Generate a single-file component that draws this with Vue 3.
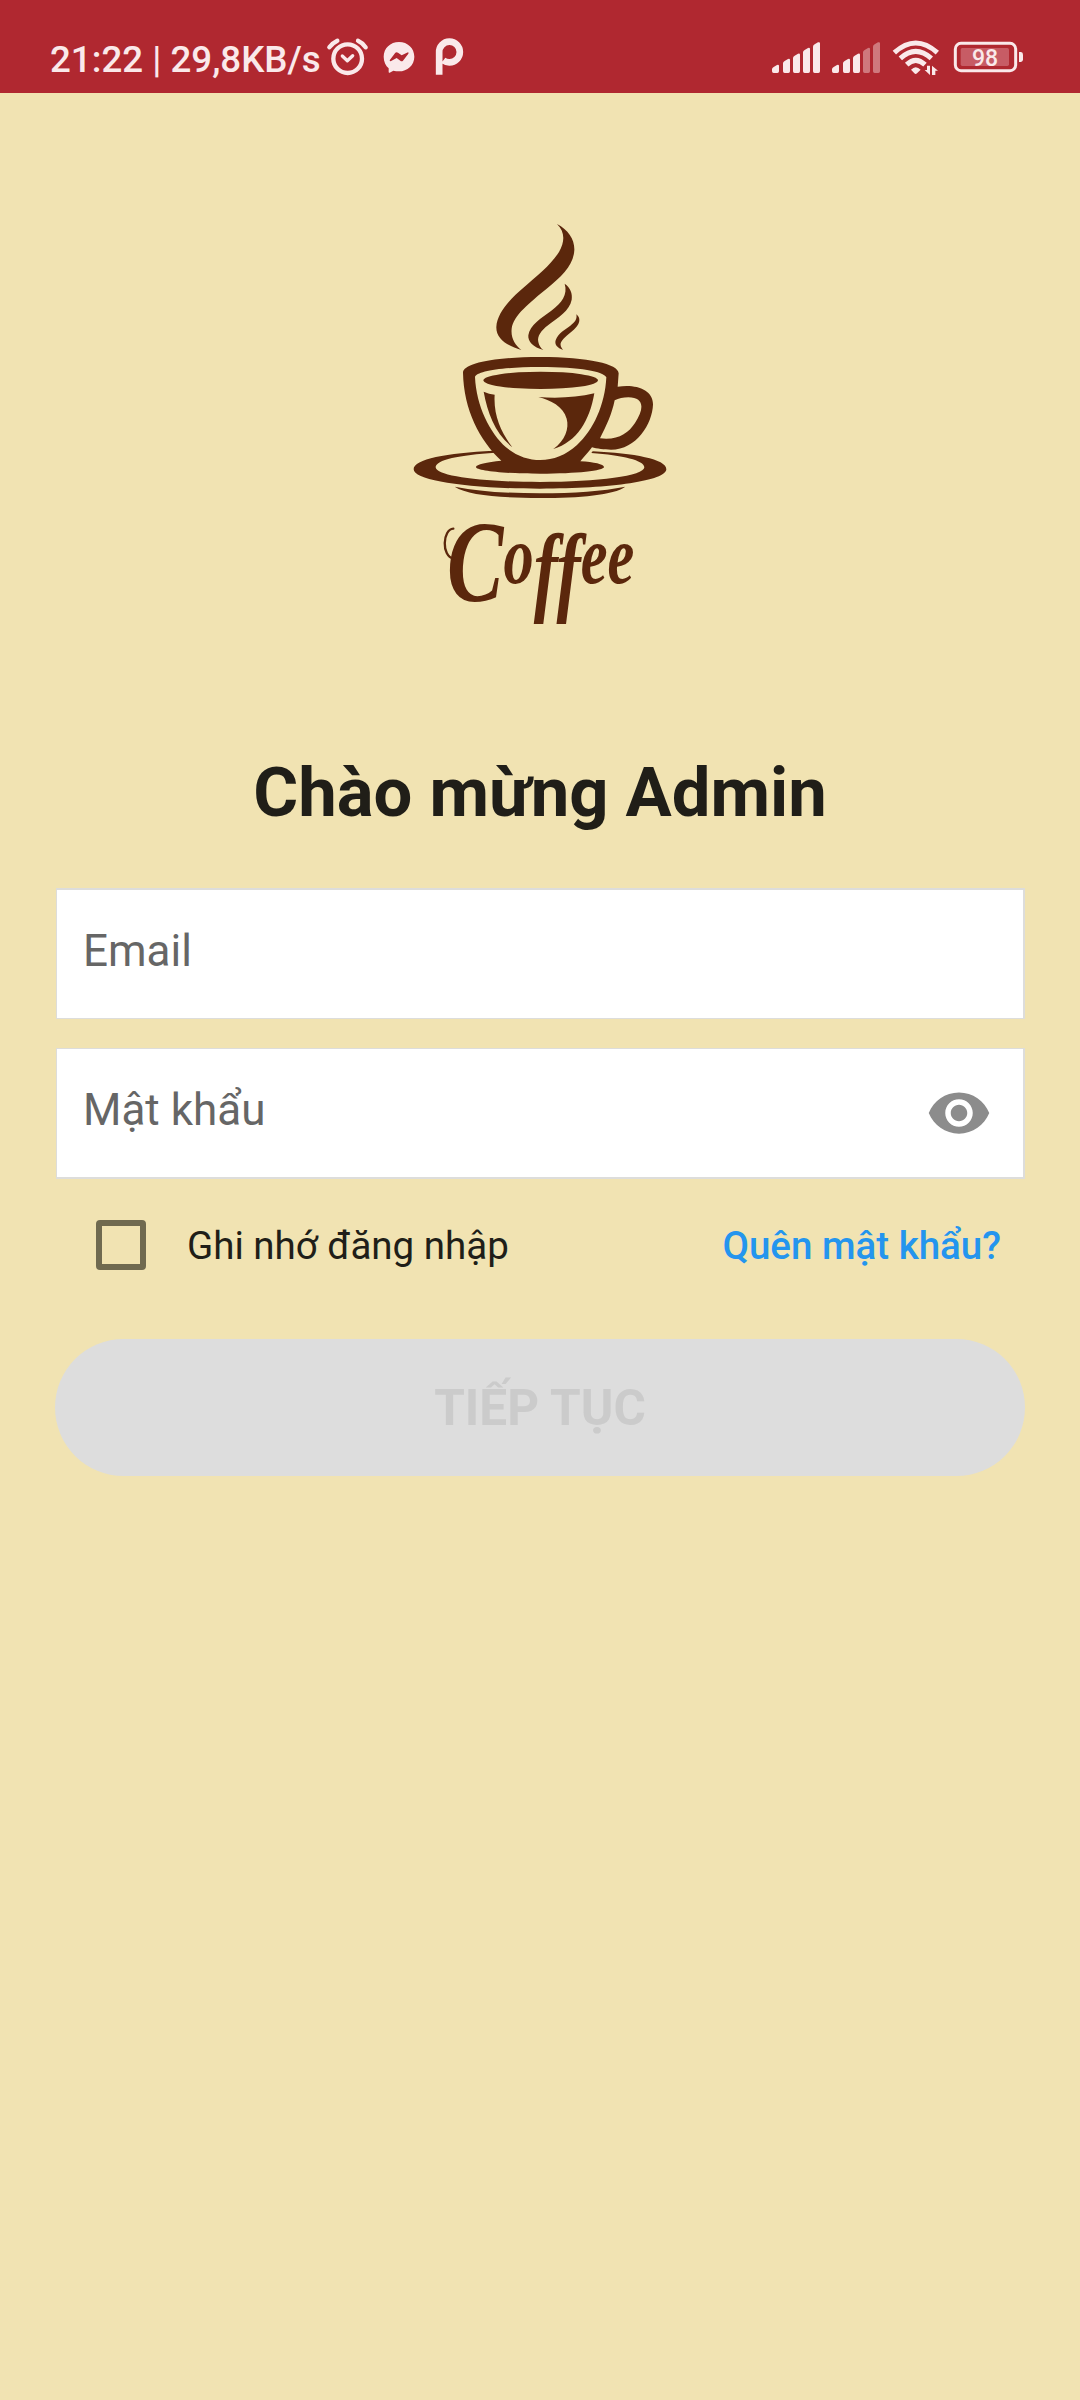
<script setup>
import { ref } from 'vue'

const email = ref('')
const password = ref('')
const remember = ref(false)

// x offset and top edge of each signal bar
const bars = [
  { x: 0, top: 134 },
  { x: 33, top: 116 },
  { x: 63, top: 100 },
  { x: 93, top: 83 },
  { x: 123, top: 66 },
]
const signals = [
  { id: 'sim1', lit: 5 },
  { id: 'sim2', lit: 3 },
]
const barPath = (b) =>
  `M${b.x} 154V${b.top + 14}Q${b.x} ${b.top + 9} ${b.x + 5} ${b.top + 7}L${b.x + 15} ${b.top + 1}Q${b.x + 21} ${b.top - 1} ${b.x + 21} ${b.top + 4}V154Q${b.x + 21} 159 ${b.x + 16} 159H${b.x + 5}Q${b.x} 159 ${b.x} 154Z`
</script>

<template>
  <div class="screen">
    <header class="status">
      <span class="clock">21:22 | 29,8KB/s</span>
      <svg class="alarm" viewBox="888 15 129 204" width="43" height="68">
        <g fill="none" stroke="#fae9ea" stroke-linecap="round" stroke-linejoin="round">
          <circle cx="953" cy="116" r="43" stroke-width="13" />
          <path d="M937 108l15 14 16-15" stroke-width="10" />
          <path d="M898 82Q907 69 922 62M984 62Q999 69 1007 82" stroke-width="13" />
        </g>
      </svg>
      <svg class="messenger" viewBox="1059 15 96 204" width="32" height="68">
        <path fill="#fae9ea" d="M1107 66C1133 66 1153 85 1153 110C1153 136 1132 154 1107 154Q1098 154 1090 152L1079 158Q1076 159 1076 156V145C1067 137 1061 125 1061 110C1061 85 1081 66 1107 66Z" />
        <path fill="#b02830" d="M1079 121L1096 98Q1100 95 1104 98L1115 106L1134 97Q1137 98 1135 101L1119 122Q1115 125 1111 122L1100 114L1082 124Q1079 124 1079 121Z" />
      </svg>
      <svg class="papp" viewBox="1215 15 87 204" width="29" height="68">
        <path fill="none" stroke="#fae9ea" stroke-width="20" d="M1227.500 164V97A31 31 0 1 1 1258 127Q1248 127 1240 121" />
      </svg>
      <div class="right">
        <svg v-for="s in signals" :key="s.id" viewBox="0 15 144 204" width="48" height="68">
          <path v-for="(b, i) in bars" :key="b.x" :d="barPath(b)" fill="#fae9ea" :opacity="i < s.lit ? 1 : 0.42" />
        </svg>
        <svg viewBox="426 15 144 204" width="48" height="68">
          <g fill="none" stroke="#fae9ea" stroke-width="15">
            <path d="M433 98Q497 40 562 98" />
            <path d="M451 115Q497 73 544 115" />
            <path d="M470 134Q497 108 525 134" />
          </g>
          <path fill="#fae9ea" d="M483 149Q497 134 512 149L501 160Q497 164 493 160Z" />
          <path fill="#fae9ea" d="M531 137h9v28l-16-15h7zM546 165v-28l18 15h-8v13z" />
        </svg>
        <svg class="battery" viewBox="609 15 213 204" width="71" height="68">
          <rect x="616" y="70" width="181" height="82" rx="17" fill="none" stroke="#fae9ea" stroke-width="9" />
          <rect x="632" y="84" width="145" height="54" rx="5" fill="#c75c65" />
          <path fill="#fae9ea" d="M807 96h6q6 0 6 8v14q0 8-6 8h-6z" />
          <text x="705" y="137" text-anchor="middle" font-size="69" font-weight="500" fill="#fae9ea">98</text>
        </svg>
      </div>
    </header>

    <main class="content">
      <svg class="logo" viewBox="0 0 840 1290" width="280" height="430" fill="#5b270c">
        <path d="M471 42C505 60 524 88 523 120C521 165 486 199 440 236C390 277 340 316 335 356C332 384 345 405 364 420C322 407 288 387 289 351C291 310 329 268 372 232C414 195 453 164 477 126C496 94 494 64 471 42Z" />
        <path d="M494 221C511 233 518 251 515 269C509 302 474 323 445 345C423 362 411 379 415 396C417 407 422 414 430 420C400 412 383 395 385 376C389 346 424 323 454 302C485 279 504 254 494 221Z" />
        <path d="M529 313C538 320 541 331 535 342C526 359 509 369 496 381C480 396 477 404 489 420C472 414 463 404 467 391C475 369 495 359 511 347C525 337 532 327 529 313Z" />
        <path fill-rule="evenodd" d="M189 488C190 460 280 441 421 441C565 441 656 462 656 490L653 530C706 521 760 538 759 584C757 640 710 719 633 719C613 719 590 716 576 712C566 727 552 739 541 754C582 756 612 763 612 771C612 782 530 791 421 791C311 791 228 782 228 771C228 763 261 756 304 752C239 691 191 599 189 488ZM225 501C229 588 269 668 318 712C384 765 468 763 531 705C580 661 615 584 619 502C611 484 540 471 421 471C303 471 230 484 225 501ZM644 571C636 611 619 648 600 685C654 691 684 671 705 639C735 594 731 562 685 562Q662 562 644 571Z" />
        <ellipse cx="422" cy="511" rx="172" ry="26" />
        <path d="M251 545Q267 552 284 554C280 616 303 667 337 712C286 671 263 610 251 545Z" />
        <path d="M415 561Q505 568 583 550C569 632 531 696 460 717C496 691 508 655 500 626C490 589 451 570 415 561Z" />
        <path fill-rule="evenodd" d="M280 722C140 729 41 747 41 778C41 812 204 836 420 836C636 836 799 812 799 778C799 747 702 730 578 724L574 729C668 736 733 751 733 772C733 798 595 816 420 816C245 816 107 798 107 772C107 749 178 735 286 728Z" />
        <path d="M164 830Q265 850 420 850Q573 850 676 830C641 855 540 864 420 864C301 864 202 855 164 830Z" />
        <g transform="translate(60 870)">
          <text transform="scale(.725 1)" x="112" y="302" font-family="'Liberation Serif', serif" font-style="italic" font-weight="bold" font-size="350">C<tspan dy="-52" font-size="250">o</tspan><tspan dy="60" font-size="300">ff</tspan><tspan dy="-60" font-size="250">ee</tspan></text>
          <path fill="none" stroke="#5b270c" stroke-width="7" stroke-linecap="round" d="M100 86C68 88 63 168 101 176" />
        </g>
      </svg>

      <h1>Chào mừng Admin</h1>

      <form class="form" @submit.prevent>
        <label class="field email"><input v-model="email" type="text" placeholder="Email" /></label>
        <label class="field">
          <input v-model="password" type="password" placeholder="Mật khẩu" />
          <svg viewBox="0 0 24 24" width="66" height="66">
            <path fill="#8c8c8c" d="M12 4.500C7 4.500 2.730 7.610 1 12c1.730 4.390 6 7.500 11 7.500s9.270-3.110 11-7.500c-1.730-4.390-6-7.500-11-7.500zM12 17c-2.760 0-5-2.240-5-5s2.240-5 5-5 5 2.240 5 5-2.240 5-5 5zm0-8c-1.660 0-3 1.340-3 3s1.340 3 3 3 3-1.340 3-3-1.340-3-3-3z" />
          </svg>
        </label>
        <div class="options">
          <label class="remember">
            <input v-model="remember" type="checkbox" />
            <span>Ghi nhớ đăng nhập</span>
          </label>
          <a class="forgot">Quên mật khẩu?</a>
        </div>
        <button disabled>TIẾP TỤC</button>
      </form>
    </main>
  </div>
</template>

<style>
body {
  margin: 0;
  background: #f1e3b2;
}
</style>

<style scoped>
.screen {
  width: 1080px;
  height: 2400px;
  background: #f1e3b2;
  font-family: Roboto, 'Noto Sans', sans-serif;
  color: #201e18;
}
.status {
  box-sizing: border-box;
  height: 93px;
  padding: 25px 56px 0 50px;
  display: flex;
  background: #b02830;
  color: #fae9ea;
}
svg {
  display: block;
  flex: none;
}
.clock {
  width: 276px;
  font-size: 36.700px;
  font-weight: 500;
  line-height: 70px;
  white-space: nowrap;
}
.messenger {
  margin-left: 14px;
}
.papp {
  margin-left: 20px;
}
.right {
  margin-left: auto;
  display: flex;
  gap: 12px;
}
.battery {
  margin-left: 1px;
}
.content {
  display: flex;
  flex-direction: column;
  align-items: center;
  padding: 117px 55px 0 56px;
}
.logo {
  margin-right: 1px;
}
h1 {
  margin: 103px 1px 0 0;
  font-size: 68.750px;
  line-height: 100px;
  font-weight: 700;
  white-space: nowrap;
}
.form {
  width: 969px;
  margin-top: 45px;
}
.field {
  box-sizing: border-box;
  height: 131px;
  margin-bottom: 28px;
  border: solid #dddddb;
  border-width: 1px 2px 2px 1px;
  background: #fff;
  padding: 0 31px 0 26px;
  display: flex;
  align-items: center;
}
.email {
  border-width: 2px 2px 1px 1px;
  margin-bottom: 29px;
}
.field input {
  flex: 1;
  min-width: 0;
  height: 100px;
  padding: 0 0 7px;
  box-sizing: border-box;
  border: 0;
  outline: 0;
  background: none;
  font: 400 44px Roboto, 'Noto Sans', sans-serif;
}
.field input::placeholder {
  color: #666;
  opacity: 1;
}
.options {
  height: 76px;
  padding: 0 24px 0 40px;
  display: flex;
  align-items: center;
  justify-content: space-between;
  font-size: 38.500px;
  line-height: 74px;
  white-space: nowrap;
}
.remember {
  display: flex;
  align-items: center;
  gap: 41px;
}
.remember span,
.forgot {
  padding-top: 2px;
}
.remember input {
  appearance: none;
  box-sizing: border-box;
  width: 50px;
  height: 50px;
  margin: 0;
  border: 6px solid #706a50;
  border-radius: 4px;
}
.forgot {
  font-weight: 500;
  color: #2495ee;
}
button {
  display: block;
  width: 970px;
  height: 137px;
  margin: 56px 0 0 -1px;
  padding: 0;
  border: 0;
  border-radius: 69px;
  background: #ddd;
  color: #cbcbcb;
  font: 700 49.500px/136px Roboto, 'Noto Sans', sans-serif;
}
</style>
